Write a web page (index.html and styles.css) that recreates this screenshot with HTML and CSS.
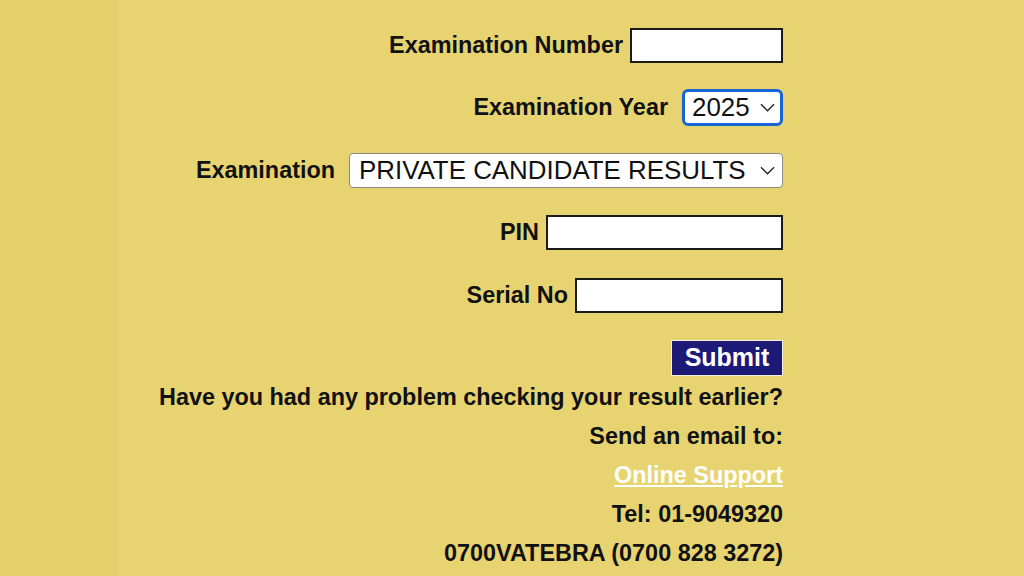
FILE: index.html
```html
<!DOCTYPE html>
<html>
<head>
<meta charset="utf-8">
<link rel="stylesheet" href="styles.css">
</head>
<body>
<div class="page">
  <div class="strip"></div>
  <form class="form">
    <div class="row">
      <label class="label">Examination Number</label>
      <input class="field w-num" type="text">
    </div>
    <div class="row">
      <label class="label">Examination Year</label>
      <div class="select select-year"><span>2025</span><svg class="chev" viewBox="0 0 16 9"><path d="M1 1 L8 8 L15 1" fill="none" stroke="#222" stroke-width="1.4"/></svg></div>
    </div>
    <div class="row">
      <label class="label">Examination</label>
      <div class="select select-exam"><span>PRIVATE CANDIDATE RESULTS</span><svg class="chev" viewBox="0 0 16 9"><path d="M1 1 L8 8 L15 1" fill="none" stroke="#222" stroke-width="1.4"/></svg></div>
    </div>
    <div class="row">
      <label class="label">PIN</label>
      <input class="field w-pin" type="text">
    </div>
    <div class="row">
      <label class="label">Serial No</label>
      <input class="field w-serial" type="text">
    </div>
    <div class="row row-submit">
      <button class="submit" type="button">Submit</button>
    </div>
    <p class="line first">Have you had any problem checking your result earlier?</p>
    <p class="line">Send an email to:</p>
    <p class="line"><a class="link" href="#">Online Support</a></p>
    <p class="line">Tel: 01-9049320</p>
    <p class="line">0700VATEBRA (0700 828 3272)</p>
  </form>
</div>
</body>
</html>
```
FILE: styles.css
```css
html, body {
  margin: 0;
  padding: 0;
  height: 100%;
}
body {
  background: #e7d471;
  font-family: "Liberation Sans", Arial, sans-serif;
  color: #111;
}
.page {
  display: flex;
  height: 576px;
  overflow: hidden;
}
.strip {
  width: 118px;
  background: #e5d06c;
  flex: none;
}
.form {
  flex: 1;
  display: flex;
  flex-direction: column;
  align-items: flex-end;
  padding: 27px 241px 0 0;
  margin: 0;
}
.row {
  display: flex;
  align-items: center;
  height: 36px;
  margin-bottom: 26.5px;
}
.label {
  font-weight: bold;
  font-size: 23.4px;
  margin-right: 7px;
}
.field {
  box-sizing: border-box;
  height: 35px;
  border: 2px solid #1a1a1a;
  background: #fff;
  margin: 0;
  padding: 0;
}
.w-num { width: 153px; }
.w-pin { width: 237px; }
.w-serial { width: 208px; }
.select {
  box-sizing: border-box;
  display: flex;
  align-items: center;
  justify-content: space-between;
  background: #fff;
  font-size: 25.9px;
  color: #111;
  margin-left: 7px;
}
.select-year {
  width: 101px;
  height: 37px;
  border: 3px solid #1565d8;
  border-radius: 6px;
  padding: 0 5px 0 7px;
}
.select-exam {
  width: 434px;
  height: 35px;
  border: 1.5px solid #8a8a80;
  border-radius: 4px;
  padding: 0 7px 0 9px;
}
.chev {
  width: 15px;
  height: 9px;
}
.row-submit {
  margin-bottom: 0;
  height: 36px;
}
.submit {
  box-sizing: border-box;
  width: 112px;
  height: 36px;
  background: #1d1a77;
  color: #fff;
  border: 1.5px solid #f4f0e0;
  font-family: "Liberation Sans", Arial, sans-serif;
  font-weight: bold;
  font-size: 25px;
  padding: 0;
  margin: 0;
}
.line {
  margin: 0;
  font-weight: bold;
  font-size: 23.4px;
  line-height: 39px;
}
.line.first {
  margin-top: 2px;
}
.link {
  color: #fff;
  text-decoration: underline;
}
```
